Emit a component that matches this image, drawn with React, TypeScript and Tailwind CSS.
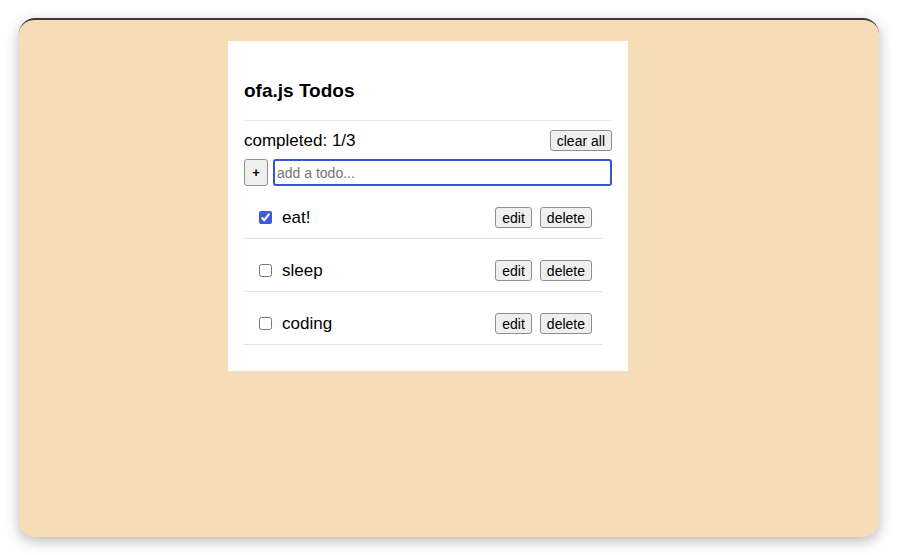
import { useState } from 'react';

interface Todo {
  id: number;
  text: string;
  done: boolean;
}

const btn =
  'h-[21px] px-[6px] bg-[#efefef] border border-[#8f8f8f] rounded-[3px] text-[14px] leading-none text-black';

export default function App() {
  const [todos, setTodos] = useState<Todo[]>([
    { id: 1, text: 'eat!', done: true },
    { id: 2, text: 'sleep', done: false },
    { id: 3, text: 'coding', done: false },
  ]);
  const [draft, setDraft] = useState('');

  const doneCount = todos.filter((t) => t.done).length;

  const add = () => {
    if (!draft.trim()) return;
    setTodos([...todos, { id: Date.now(), text: draft.trim(), done: false }]);
    setDraft('');
  };

  return (
    <div
      className="w-[897px] h-[555px] bg-white pt-[18px] pl-[19px] overflow-hidden"
      style={{ fontFamily: '"Liberation Sans", Arial, sans-serif' }}
    >
      <div className="w-[860px] h-[519px] bg-[#f6dcb8] rounded-[16px] border-t-2 border-[#3a3a3a] shadow-[0_4px_14px_rgba(0,0,0,0.28)] pl-[209px] pt-[21px]">
        <div className="w-[400px] bg-white px-4 pb-[26px]">
          <h1 className="pt-[39px] text-[19px] leading-[22px] font-bold text-black">ofa.js Todos</h1>
          <div className="mt-[18px] border-t border-[#e6e6ee]" />

          <div className="mt-[9px] flex items-center justify-between h-[21px]">
            <span className="text-[17px] text-black">completed: {doneCount}/{todos.length}</span>
            <button className={btn} onClick={() => setTodos([])}>
              clear all
            </button>
          </div>

          <div className="mt-[8px] flex gap-[5px] h-[27px]">
            <button className="w-[24px] h-[27px] bg-[#efefef] border border-[#8f8f8f] rounded-[3px] text-[13px] font-bold" onClick={add}>
              +
            </button>
            <input
              value={draft}
              onChange={(e) => setDraft(e.target.value)}
              placeholder="add a todo..."
              className="flex-1 h-[27px] border-2 border-[#3556d4] rounded-[3px] px-[2px] text-[14px] text-black placeholder:text-[#757575] outline-none"
            />
          </div>

          <ul className="mr-[10px]">
            {todos.map((t) => (
              <li key={t.id} className="flex items-center pt-[21px] pb-[10px] pl-[15px] pr-[10px] border-b border-[#e3e3e3]">
                <input
                  type="checkbox"
                  checked={t.done}
                  onChange={() => setTodos(todos.map((x) => (x.id === t.id ? { ...x, done: !x.done } : x)))}
                  className="w-[13px] h-[13px] m-0 accent-[#3b5bdb]"
                />
                <span className="ml-[10px] text-[17px] leading-[21px] text-black flex-1">{t.text}</span>
                <div className="flex gap-[8px]">
                  <button className={btn}>edit</button>
                  <button className={btn} onClick={() => setTodos(todos.filter((x) => x.id !== t.id))}>
                    delete
                  </button>
                </div>
              </li>
            ))}
          </ul>
        </div>
      </div>
    </div>
  );
}
